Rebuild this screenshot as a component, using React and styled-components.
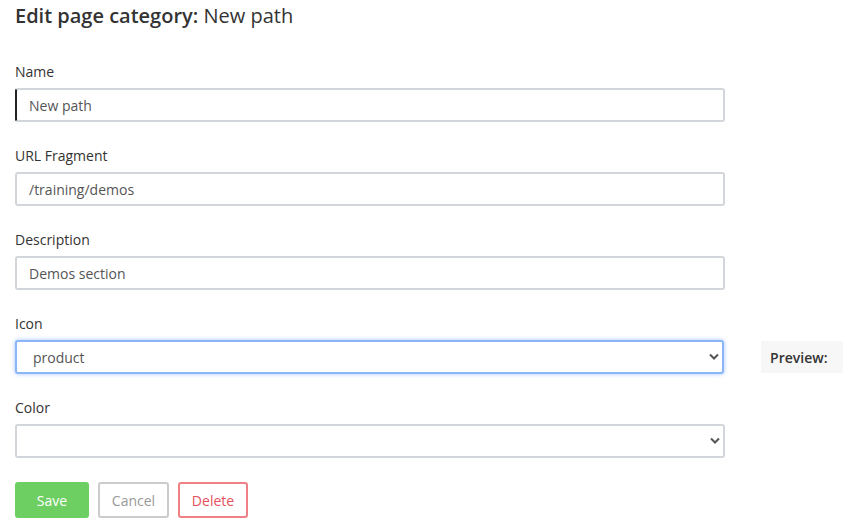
import React from 'react'
import styled, { createGlobalStyle } from 'styled-components'

const Global = createGlobalStyle`
  body {
    margin: 0;
    background: #fff;
    font-family: "Open Sans", "Liberation Sans", sans-serif;
    color: #333;
  }
`;

const Page = styled.div`
  padding: 2px 0 0 15px;
`;

const Title = styled.h1`
  margin: 0 0 32px;
  font-size: 20px;
  line-height: 28px;
  font-weight: 400;
  color: #333;
  b {
    font-weight: 600;
  }
`;

const Group = styled.div`
  margin-bottom: 24px;
`;

const Label = styled.label`
  display: block;
  font-size: 14px;
  line-height: 20px;
  margin-bottom: 6px;
  color: #333;
`;

const Row = styled.div`
  display: flex;
  align-items: center;
  gap: 37px;
`;

const Input = styled.input`
  box-sizing: border-box;
  width: 710px;
  height: 34px;
  padding: 0 12px;
  border: 2px solid #d2d6da;
  border-left-color: ${p => (p.$active ? '#222' : '#d2d6da')};
  border-radius: 3px;
  font-family: inherit;
  font-size: 14px;
  color: #555;
  outline: none;
`;

const SelectWrap = styled.div`
  position: relative;
  width: 710px;
`;

const Select = styled.select`
  box-sizing: border-box;
  width: 100%;
  height: 34px;
  padding: 0 16px;
  appearance: none;
  background: #fff;
  border: 2px solid ${p => (p.$focus ? '#8ab6f7' : '#d2d6da')};
  box-shadow: ${p => (p.$focus ? '0 0 4px rgba(90, 150, 255, 0.55)' : 'none')};
  border-radius: 3px;
  font-family: inherit;
  font-size: 14px;
  color: #555;
  outline: none;
`;

const Chevron = styled.svg`
  position: absolute;
  right: 4px;
  top: 13px;
  pointer-events: none;
`;

const Preview = styled.div`
  width: 82px;
  height: 32px;
  box-sizing: border-box;
  padding-left: 9px;
  display: flex;
  align-items: center;
  background: #f7f7f7;
  font-size: 14px;
  font-weight: 600;
  color: #333;
`;

const Buttons = styled.div`
  display: flex;
  gap: 9px;
`;

const Button = styled.button`
  box-sizing: border-box;
  height: 36px;
  width: ${p => p.$w}px;
  border-radius: 3px;
  font-family: inherit;
  font-size: 14px;
  background: ${p => p.$bg || '#fff'};
  color: ${p => p.$color};
  border: 2px solid ${p => p.$border};
  cursor: pointer;
`;

const Arrow = () => (
  <Chevron width="12" height="8" viewBox="0 0 12 8">
    <path d="M2 1.5 L6 5.5 L10 1.5" fill="none" stroke="#555" strokeWidth="2" />
  </Chevron>
);

export default function App() {
  return (
    <Page>
      <Global />
      <Title><b>Edit page category:</b> New path</Title>
      <Group>
        <Label>Name</Label>
        <Input $active defaultValue="New path" />
      </Group>
      <Group>
        <Label>URL Fragment</Label>
        <Input defaultValue="/training/demos" />
      </Group>
      <Group>
        <Label>Description</Label>
        <Input defaultValue="Demos section" />
      </Group>
      <Group>
        <Label>Icon</Label>
        <Row>
          <SelectWrap>
            <Select $focus defaultValue="product">
              <option value="product">product</option>
            </Select>
            <Arrow />
          </SelectWrap>
          <Preview>Preview:</Preview>
        </Row>
      </Group>
      <Group>
        <Label>Color</Label>
        <SelectWrap>
          <Select defaultValue="">
            <option value=""></option>
          </Select>
          <Arrow />
        </SelectWrap>
      </Group>
      <Buttons>
        <Button $w={74} $bg="#6dce62" $border="#6dce62" $color="#fff">Save</Button>
        <Button $w={71} $border="#cccccc" $color="#999">Cancel</Button>
        <Button $w={70} $border="#ef8088" $color="#e5505d">Delete</Button>
      </Buttons>
    </Page>
  );
}
